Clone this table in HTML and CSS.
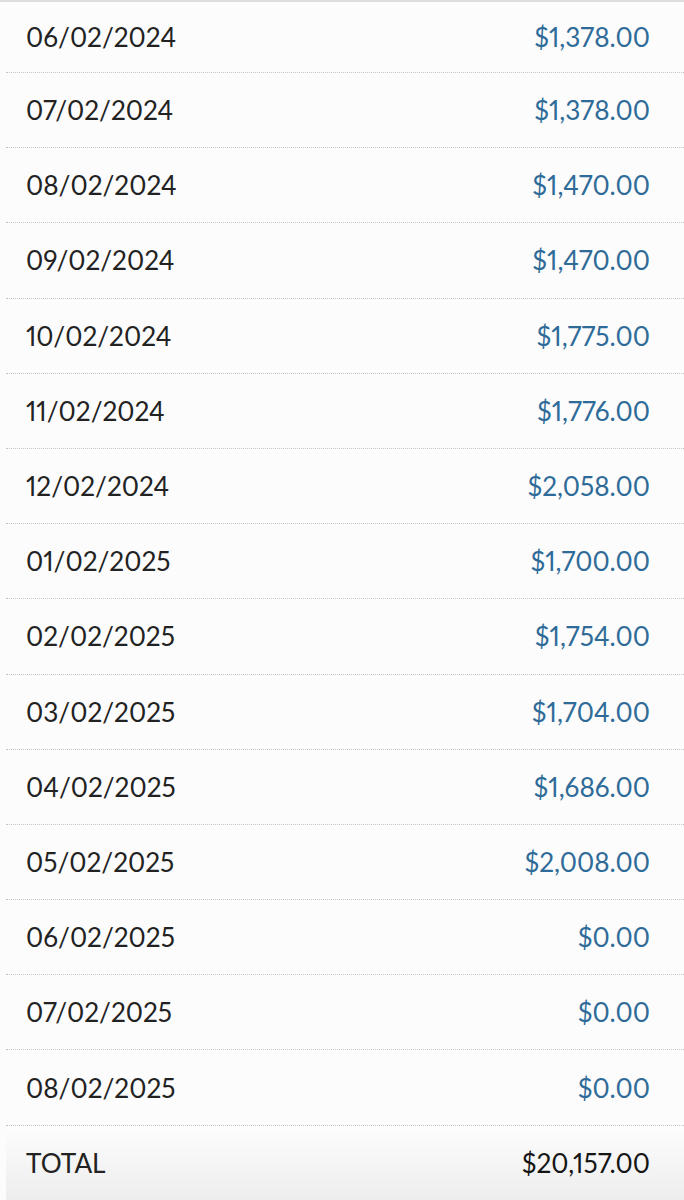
FILE: index.html
```html
<!DOCTYPE html>
<html>
<head>
<meta charset="utf-8">
<link rel="stylesheet" href="styles.css">
</head>
<body>
<div class="table">
  <div class="row first"><span class="date">06/02/2024</span><span class="amt">$1,378.00</span></div>
  <div class="row"><span class="date">07/02/2024</span><span class="amt">$1,378.00</span></div>
  <div class="row"><span class="date">08/02/2024</span><span class="amt">$1,470.00</span></div>
  <div class="row"><span class="date">09/02/2024</span><span class="amt">$1,470.00</span></div>
  <div class="row"><span class="date">10/02/2024</span><span class="amt">$1,775.00</span></div>
  <div class="row"><span class="date">11/02/2024</span><span class="amt">$1,776.00</span></div>
  <div class="row"><span class="date">12/02/2024</span><span class="amt">$2,058.00</span></div>
  <div class="row"><span class="date">01/02/2025</span><span class="amt">$1,700.00</span></div>
  <div class="row"><span class="date">02/02/2025</span><span class="amt">$1,754.00</span></div>
  <div class="row"><span class="date">03/02/2025</span><span class="amt">$1,704.00</span></div>
  <div class="row"><span class="date">04/02/2025</span><span class="amt">$1,686.00</span></div>
  <div class="row"><span class="date">05/02/2025</span><span class="amt">$2,008.00</span></div>
  <div class="row"><span class="date">06/02/2025</span><span class="amt">$0.00</span></div>
  <div class="row"><span class="date">07/02/2025</span><span class="amt">$0.00</span></div>
  <div class="row"><span class="date">08/02/2025</span><span class="amt">$0.00</span></div>
  <div class="row total"><span class="date">TOTAL</span><span class="amt">$20,157.00</span></div>
</div>
</body>
</html>
```

FILE: styles.css
```css
html, body {
  margin: 0;
  padding: 0;
  background: #fcfcfc;
}
body {
  font-family: Lato, "Open Sans", sans-serif;
  font-size: 26.2px;
  font-variant-numeric: proportional-nums;
  color: #222;
  border-top: 2px solid #dedede;
}
.table {
  padding-left: 6px;
  display: flex;
  flex-direction: column;
}
.row {
  display: flex;
  justify-content: space-between;
  align-items: center;
  height: 75.2px;
  box-sizing: border-box;
  padding: 0 34px 0 20px;
  border-bottom: 1px dotted #c4c4c4;
}
.row.first {
  height: 71px;
}
.amt {
  color: #2f6b98;
}
.total {
  background: linear-gradient(#fdfdfd, #ededed);
}
.total .amt {
  color: #151515;
}
```
